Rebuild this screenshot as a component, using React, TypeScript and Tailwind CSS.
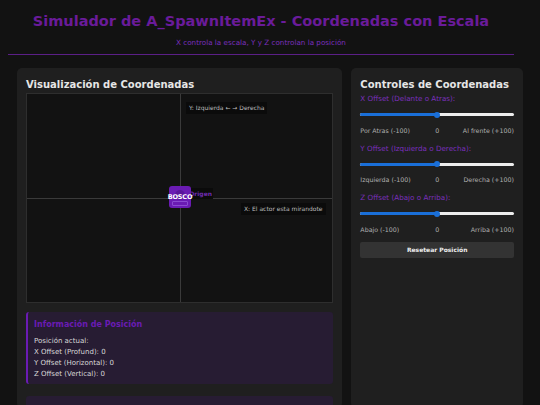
import React from "react";

const font = { fontFamily: '"DejaVu Sans", Verdana, sans-serif' };

function Slider({ label, left, right, first }: { label: string; left: string; right: string; first?: boolean }) {
  return (
    <div className={first ? "mt-[1px]" : "mt-[9px]"}>
      <div className="text-[7.2px] leading-[10px] text-[#7b2fbe]">{label}</div>
      <div className="relative mt-[9px] h-[3px] rounded-full bg-[#ececec]">
        <div className="absolute left-0 top-0 h-[3px] w-1/2 rounded-full bg-[#1a6fd8]" />
        <div className="absolute left-1/2 top-1/2 h-[6px] w-[6px] -translate-x-1/2 -translate-y-1/2 rounded-full bg-[#1a6fd8]" />
      </div>
      <div className="mt-[10.5px] grid h-[8px] grid-cols-[1fr_auto_1fr] text-[6.3px] leading-[8px] text-[#b0b0b0]">
        <span>{left}</span>
        <span className="text-center">0</span>
        <span className="text-right">{right}</span>
      </div>
    </div>
  );
}

export default function App() {
  return (
    <div className="min-h-[405px] w-[540px] overflow-hidden bg-[#121212] text-[#e0e0e0]" style={font}>
      <header className="ml-[8px] mr-[26px] pt-[12px]">
        <h1 className="text-center text-[14.5px] font-bold leading-[18px] text-[#6a1b9a]">
          Simulador de A_SpawnItemEx - Coordenadas con Escala
        </h1>
        <p className="mt-[8px] text-center text-[7.2px] leading-[9px] text-[#7b2fbe]">
          X controla la escala, Y y Z controlan la posición
        </p>
        <div className="mt-[7px] h-px bg-[#5b1f87]" />
      </header>

      <div className="mt-[13px] flex gap-[9px] pl-[17px] pr-[17px]">
        <section className="h-[340px] w-[326px] rounded-[5px] bg-[#1f1f1f] px-[9px] pt-[9px]">
          <h2 className="text-[10px] font-bold leading-[16px] text-[#e6e6e6]">Visualización de Coordenadas</h2>
          <div className="relative h-[210px] border border-[#2e2e2e] bg-[#121212]">
            <div className="absolute bottom-0 left-1/2 top-0 w-px bg-[#3a3a3a]" />
            <div className="absolute left-0 right-0 top-1/2 h-px bg-[#3a3a3a]" />
            <div className="absolute left-[159px] top-[8px] bg-[#0b0b0b] px-[3px] py-[2px] text-[6px] leading-[8px] text-[#bdbdbd]">
              Y: Izquierda ← → Derecha
            </div>
            <div className="absolute left-[214px] top-[109px] bg-[#0b0b0b] px-[3px] py-[2px] text-[6px] leading-[8px] text-[#bdbdbd]">
              X: El actor esta mirandote
            </div>
            <div className="absolute left-[164px] top-[94px] flex h-[11px] w-[22px] items-center justify-end bg-[#0b0b0b] pr-[1px] text-[6px] font-bold leading-[8px] text-[#6f2bb0]">
              Origen
            </div>
            <div className="absolute left-[142px] top-[92px] flex h-[22px] w-[22px] items-center justify-center overflow-visible rounded-[3px] bg-[#6a1bb3]">
              <div className="absolute left-[6px] top-[4px] h-[10px] w-[10px] rounded-full bg-[#5a149c]" />
              <div className="absolute bottom-[2px] left-[3px] right-[3px] h-[5px] rounded-[1px] border border-[#8a4ad0]" />
              <span className="relative text-[6.5px] font-bold leading-none tracking-[-0.2px] text-white">BOSCO</span>
            </div>
          </div>

          <div className="mt-[9px] rounded-[3px] border-l-2 border-[#6a1bb3] bg-[#271c33] px-[6px] pb-[4px] pt-[7px]">
            <h3 className="text-[8px] font-bold leading-[12px] text-[#6a1bb3]">Información de Posición</h3>
            <div className="mt-[5px] text-[7px] leading-[11px] text-[#d8d8d8]">
              <div>Posición actual:</div>
              <div>X Offset (Profund): 0</div>
              <div>Y Offset (Horizontal): 0</div>
              <div>Z Offset (Vertical): 0</div>
            </div>
          </div>
          <div className="mt-[12px] h-[20px] rounded-[3px] bg-[#271c33]" />
        </section>

        <section className="h-[340px] w-[172px] rounded-[5px] bg-[#1f1f1f] px-[9px] pt-[9px]">
          <h2 className="text-[10px] font-bold leading-[16px] text-[#e6e6e6]">Controles de Coordenadas</h2>
          <Slider first label="X Offset (Delante o Atras):" left="Por Atras (-100)" right="Al frente (+100)" />
          <Slider label="Y Offset (Izquierda o Derecha):" left="Izquierda (-100)" right="Derecha (+100)" />
          <Slider label="Z Offset (Abajo o Arriba):" left="Abajo (-100)" right="Arriba (+100)" />
          <button className="mt-[8px] flex h-[16px] w-full items-center justify-center rounded-[2px] bg-[#333333] text-[6px] font-bold text-[#eeeeee]">
            Resetear Posición
          </button>
        </section>
      </div>
    </div>
  );
}
